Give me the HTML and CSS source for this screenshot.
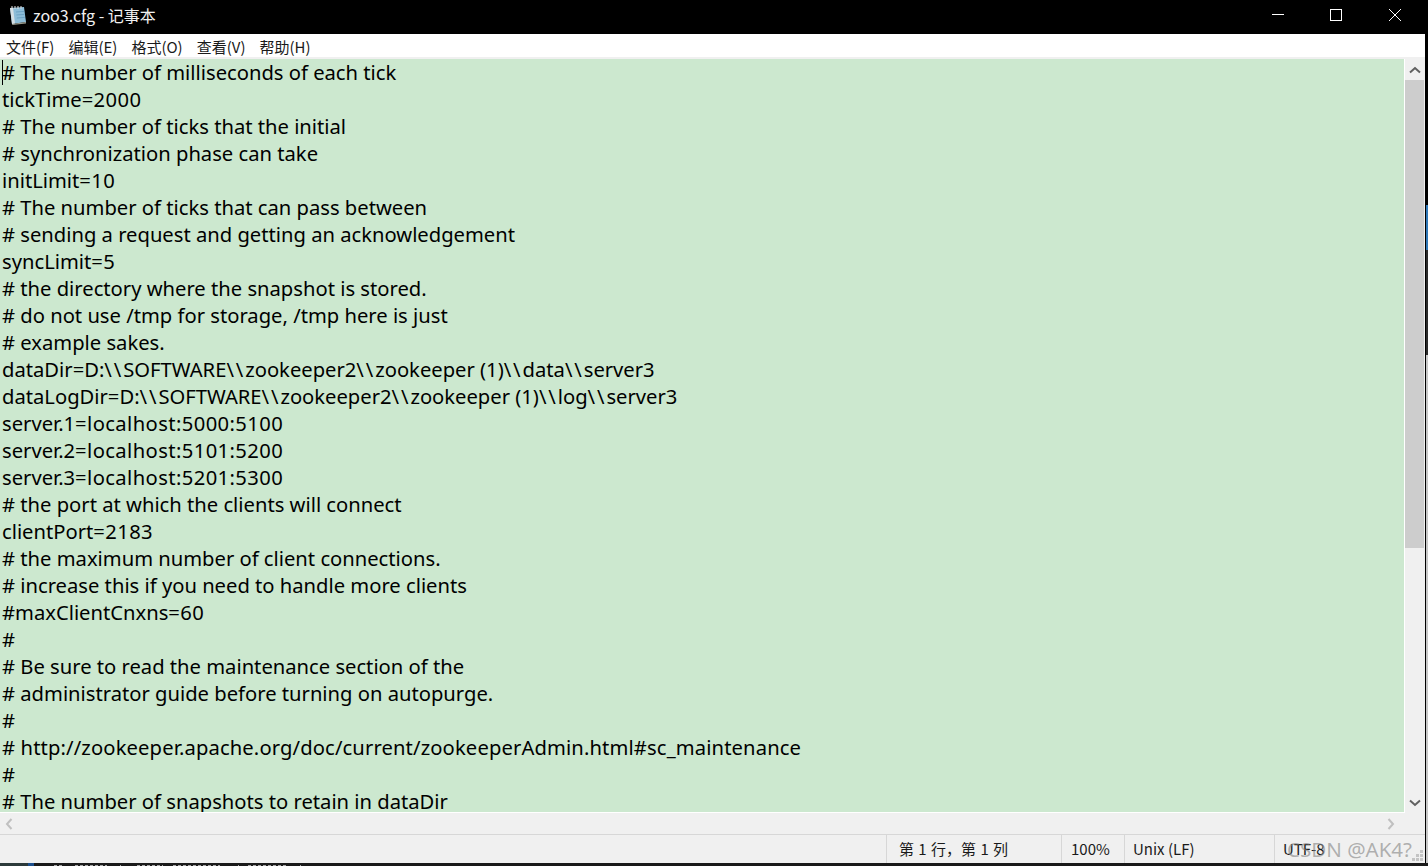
FILE: index.html
```html
<!DOCTYPE html>
<html lang="zh-CN">
<head>
<meta charset="utf-8">
<title>zoo3.cfg - 记事本</title>
<link rel="stylesheet" href="styles.css">
</head>
<body>
<div class="screen">
<div class="upper">
<div class="window">
  <header class="titlebar">
    <svg class="app-icon" width="18" height="19" viewBox="0 0 18 19">
      <path d="M1 2 L15 1 L17 16 L3 18 Z" fill="#8dbdd8"/>
      <path d="M1 2 L4 1.8 L6 17.6 L3 18 Z" fill="#d5dfe4"/>
      <path d="M3 18 L17 16 L17 17.5 L3.4 19 Z" fill="#9a9a8c"/>
      <path d="M7 6 L15 5.4 M7.4 9 L15.4 8.4 M7.8 12 L15.8 11.4" stroke="#6ea3c4" stroke-width="1"/>
      <path d="M3 0 V3 M6 0 V3 M9 0 V3 M12 0 V2.6" stroke="#e4e4e4" stroke-width="1"/>
    </svg>
    <span class="title">zoo3.cfg - 记事本</span>
    <div class="controls">
      <div class="ctl"><svg width="12" height="12" viewBox="0 0 12 12"><path d="M0 5.5 H12" stroke="#fff" stroke-width="1"/></svg></div>
      <div class="ctl"><svg width="12" height="12" viewBox="0 0 12 12"><rect x="0.5" y="0.5" width="11" height="11" fill="none" stroke="#fff" stroke-width="1"/></svg></div>
      <div class="ctl"><svg width="12" height="12" viewBox="0 0 12 12"><path d="M0 0 L12 12 M12 0 L0 12" stroke="#fff" stroke-width="1"/></svg></div>
    </div>
  </header>
  <nav class="menubar">
    <span>文件(F)</span><span>编辑(E)</span><span>格式(O)</span><span>查看(V)</span><span>帮助(H)</span>
  </nav>
  <div class="middle">
    <main class="editor">
      <div class="caret"></div>
      <div class="text">
        <div class="ln"># The number of milliseconds of each tick</div>
        <div class="ln">tickTime<span class="val">=2000</span></div>
        <div class="ln"># The number of ticks that the initial</div>
        <div class="ln"># synchronization phase can take</div>
        <div class="ln">initLimit<span class="val">=10</span></div>
        <div class="ln"># The number of ticks that can pass between</div>
        <div class="ln"># sending a request and getting an acknowledgement</div>
        <div class="ln">syncLimit<span class="val">=5</span></div>
        <div class="ln"># the directory where the snapshot is stored.</div>
        <div class="ln"># do not use /tmp for storage, /tmp here is just</div>
        <div class="ln"># example sakes.</div>
        <div class="ln">dataDir=D:<span class="bs">\\</span>SOFTWARE<span class="bs">\\</span>zookeeper2<span class="bs">\\</span>zookeeper (1)<span class="bs">\\</span>data<span class="bs">\\</span>server3</div>
        <div class="ln">dataLogDir=D:<span class="bs">\\</span>SOFTWARE<span class="bs">\\</span>zookeeper2<span class="bs">\\</span>zookeeper (1)<span class="bs">\\</span>log<span class="bs">\\</span>server3</div>
        <div class="ln">server.1<span class="val">=localhost:5000:5100</span></div>
        <div class="ln">server.2<span class="val">=localhost:5101:5200</span></div>
        <div class="ln">server.3<span class="val">=localhost:5201:5300</span></div>
        <div class="ln"># the port at which the clients will connect</div>
        <div class="ln">clientPort<span class="val">=2183</span></div>
        <div class="ln"># the maximum number of client connections.</div>
        <div class="ln"># increase this if you need to handle more clients</div>
        <div class="ln">#maxClientCnxns<span class="val">=60</span></div>
        <div class="ln">#</div>
        <div class="ln"># Be sure to read the maintenance section of the</div>
        <div class="ln"># administrator guide before turning on autopurge.</div>
        <div class="ln">#</div>
        <div class="ln url"># http://zookeeper.apache.org/doc/current/zookeeperAdmin.html#sc_maintenance</div>
        <div class="ln">#</div>
        <div class="ln"># The number of snapshots to retain in dataDir</div>
      </div>
    </main>
    <div class="vscroll">
      <div class="arrow-v"><svg width="12" height="8" viewBox="0 0 12 8"><path d="M1 6.5 L6 2 L11 6.5" fill="none" stroke="#606060" stroke-width="2"/></svg></div>
      <div class="track"><div class="thumb"></div></div>
      <div class="arrow-v"><svg width="12" height="8" viewBox="0 0 12 8"><path d="M1 1.5 L6 6 L11 1.5" fill="none" stroke="#606060" stroke-width="2"/></svg></div>
    </div>
  </div>
  <div class="hscroll">
    <svg width="8" height="12" viewBox="0 0 8 12"><path d="M6.5 1 L2 6 L6.5 11" fill="none" stroke="#c0c0c0" stroke-width="2"/></svg>
    <svg width="8" height="12" viewBox="0 0 8 12"><path d="M1.5 1 L6 6 L1.5 11" fill="none" stroke="#c0c0c0" stroke-width="2"/></svg>
  </div>
  <footer class="statusbar">
    <div class="cell cell-pos">第 1 行，第 1 列</div>
    <div class="cell cell-zoom">100%</div>
    <div class="cell cell-eol">Unix (LF)</div>
    <div class="cell cell-enc">UTF-8</div>
    <span class="watermark">CSDN @AK4?</span>
    <svg class="grip" width="12" height="12" viewBox="0 0 12 12"><path d="M8 0h3v3H8zM4 4h3v3H4zM8 4h3v3H8zM0 8h3v3H0zM4 8h3v3H4zM8 8h3v3H8z" fill="#c4c4c4"/></svg>
  </footer>
</div>
<div class="edge">
  <div class="seg seg-black"></div>
  <div class="seg seg-blue"></div>
  <div class="seg seg-dark"></div>
  <div class="seg seg-grey"></div>
</div>
</div>
<svg class="taskstrip" width="1428" height="3" viewBox="0 0 1428 3">
  <rect x="0" y="0" width="28" height="3" fill="#2c3a3a"/>
  <rect x="28" y="0" width="6" height="3" fill="#1d4f8c"/>
  <path d="M54 2.5h9M75 2.5h32M120 2.5h1M137 2.5h26M173 2.5h47M238 2.5h1M248 2.5h39M300 2.5h1" stroke="#a8a8a8" stroke-width="1" stroke-dasharray="3 2"/>
</svg>
</div>
</body>
</html>
```
FILE: styles.css
```css
* { box-sizing: border-box; }
html, body { margin: 0; padding: 0; height: 100%; overflow: hidden; background: #000; }
.screen { width: 1428px; height: 866px; display: flex; flex-direction: column; background: #1a1a1a; }
.upper { height: 863px; display: flex; flex: none; }
.window {
  width: 1425px; height: 863px; display: flex; flex-direction: column; flex: none;
  font-family: "Microsoft YaHei", "Noto Sans CJK SC", "Noto Sans", sans-serif;
}
.edge { flex: 1; border-left: 1px solid #000; display: flex; flex-direction: column; }
.seg-black { height: 205px; background: #000; }
.seg-blue { height: 45px; background: #2f78b8; }
.seg-dark { height: 105px; background: #2a2a2a; }
.seg-grey { flex: 1; background: #c8c8c8; }
.titlebar { height: 34px; background: #000; display: flex; align-items: flex-start; color: #fff; flex: none; }
.app-icon { margin: 6px 0 0 9px; flex: none; }
.title { margin-left: 6px; font-size: 16px; line-height: 30px; color: #f0f0f0; }
.controls { margin-left: auto; display: flex; padding-right: 1px; }
.ctl { width: 58.5px; height: 30px; display: flex; align-items: center; justify-content: center; }
.menubar { height: 23px; background: #fff; display: flex; gap: 14px; padding: 0 0 0 6px; font-size: 15px; line-height: 26px; color: #1a1a1a; flex: none; }
.middle { height: 756px; display: flex; flex: none; background: #f0f0f0; padding-top: 2px; }
.editor { position: relative; width: 1405px; background: #cce8cf; overflow: hidden; padding: 0 0 0 2px; border-right: 1px solid #fff; border-bottom: 1px solid #fff; }
.text { font-family: "Noto Sans", sans-serif; font-size: 20.2px; line-height: 27px; color: #000; }
.ln { height: 27px; white-space: pre; }
.url { letter-spacing: 0.13px; }
.val { letter-spacing: 0.4px; }
.bs { letter-spacing: 1.9px; }
.caret { position: absolute; left: 2px; top: 1px; width: 1px; height: 25px; background: #000; }
.vscroll { width: 19px; display: flex; flex-direction: column; background: #f0f0f0; }
.arrow-v { height: 21px; display: flex; align-items: center; justify-content: center; flex: none; }
.track { flex: 1; }
.thumb { height: 468px; background: #cdcdcd; }
.hscroll { height: 21px; background: #f0f0f0; display: flex; justify-content: space-between; align-items: center; padding: 0 30px 0 5px; flex: none; }
.statusbar { position: relative; height: 29px; background: #f0f0f0; border-top: 1px solid #d7d7d7; display: flex; justify-content: flex-end; font-size: 15px; color: #1a1a1a; flex: none; }
.cell { border-left: 1px solid #d7d7d7; line-height: 28px; padding-left: 12px; }
.cell-pos { width: 175px; word-spacing: 1px; }
.cell-zoom { width: 63px; padding-left: 9px; }
.cell-eol { width: 150px; padding-left: 8px; }
.cell-enc { width: 151px; padding-left: 8px; }
.watermark { position: absolute; right: 13px; top: 0; font-size: 20.5px; line-height: 28px; color: rgba(130,130,130,0.6); font-family: "Noto Sans", sans-serif; }
.grip { position: absolute; right: 1px; bottom: 1px; }
.taskstrip { display: block; flex: none; }
```
